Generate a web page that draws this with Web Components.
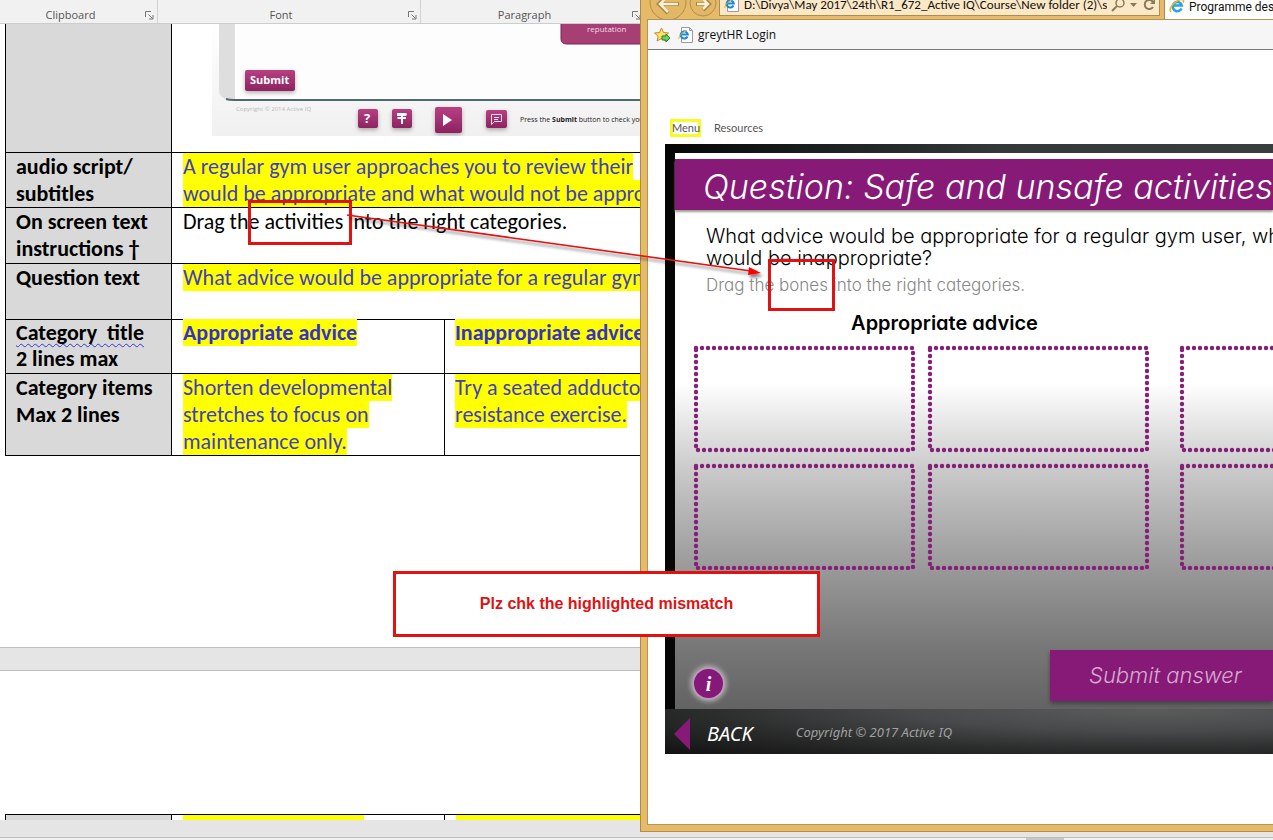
<!DOCTYPE html>
<html lang="en">
<head>
<meta charset="utf-8">
<title>Storyboard review</title>
<style>
html,body{margin:0;height:100%}
body{font-family:"Open Sans","Noto Sans",sans-serif;background:#e5e5e5;overflow:hidden}
</style>
</head>
<body>
<review-desktop>
  <word-window slot="document">
    <ribbon-group style="--w:158px" label="Clipboard"></ribbon-group>
    <ribbon-group style="--w:263px" label="Font"></ribbon-group>
    <ribbon-group style="--w:224px" label="Paragraph"></ribbon-group>
  </word-window>
  <browser-window slot="browser">
    <course-player></course-player>
  </browser-window>
  <review-notes slot="notes">Plz chk the highlighted mismatch</review-notes>
</review-desktop>

<script>
const define = (name, html) => customElements.define(name, class extends HTMLElement {
  constructor() {
    super();
    const t = document.createElement('template');
    t.innerHTML = html;
    this.attachShadow({mode: 'open'}).append(t.content.cloneNode(true));
    const label = this.shadowRoot.querySelector('[data-label]');
    if (label) label.textContent = this.getAttribute('label');
  }
});

define('review-desktop', `
<style>
:host{display:flex;flex-direction:column;height:100vh;min-height:640px;position:relative;overflow:hidden}
.windows{flex:1;display:grid;grid-template-columns:minmax(0,640fr) minmax(0,633fr);min-height:0}
.status{height:2px;background:#f1f1f1;border-top:1px solid #bdbdbd;display:flex;justify-content:flex-end}
.thumb{width:38px;background:#c6c6c6;margin-right:209px}
</style>
<div class="windows"><slot name="document"></slot><slot name="browser"></slot></div>
<div class="status"><span class="thumb"></span></div>
<slot name="notes"></slot>`);

define('ribbon-group', `
<style>
:host{display:flex;align-items:flex-end;width:var(--w);flex:none;box-sizing:border-box;height:23px;border-right:1px solid #d2d2d2;padding:0 3px 0 0;font:11px/16px "Open Sans",sans-serif;color:#555}
span{flex:1;text-align:center;padding-right:4px}
button{border:0;background:none;padding:0;margin:0 0 3px;width:9px;height:9px;line-height:0}
</style>
<span data-label></span>
<button aria-label="Open dialog"><svg width="9" height="9" viewBox="0 0 9 9" fill="none" stroke="#777"><path d="M.5 6V.5H6M3.500 3.500l4 4M8 4v4H4"/></svg></button>`);

define('slide-picture', `
<style>:host{display:block;line-height:0}svg{display:block}</style>
<svg width="440" height="112" viewBox="210 24 440 112" font-family="Open Sans, sans-serif">
<defs>
<linearGradient id="p" x2="0" y2="1"><stop stop-color="#b83f82"/><stop offset="1" stop-color="#8c2460"/></linearGradient>
<linearGradient id="b" x2="0" y2="1"><stop stop-color="#fff"/><stop offset="1" stop-color="#f0f0f0"/></linearGradient>
<filter id="s" x="-30%" y="-30%" width="160%" height="160%"><feDropShadow dx="0" dy="2" stdDeviation="2" flood-opacity=".3"/></filter>
</defs>
<path fill="url(#b)" d="M212 24h438v112H212z"/>
<path fill="#dedede" d="M219 24h20v76h-10q-10-2-10-10z"/>
<path fill="#fff" d="M235 24h415v75H235z"/>
<path stroke="#4f696d" stroke-width="2" fill="none" d="M226 99q3 1 8 1h416"/>
<path fill="#fdfdfd" d="M236 24h414v74H236z"/>
<path fill="#a63f74" stroke="#7b2454" stroke-width="1" d="M561 20v19q0 5 6 5h90V20z"/>
<text x="587" y="32" font-size="8" fill="#f3dbe8">reputation</text>
<rect x="245" y="70" width="50" height="21" rx="2" fill="url(#p)" filter="url(#s)"/>
<text x="250" y="84" font-size="11" font-weight="700" fill="#fff">Submit</text>
<text x="236" y="111" font-size="6" fill="#b8b8b8">Copyright © 2014 Active IQ</text>
<g filter="url(#s)" fill="url(#p)"><rect x="358" y="109" width="20" height="19" rx="2"/><rect x="392" y="109" width="20" height="19" rx="2"/><rect x="435" y="107" width="27" height="26" rx="2"/><rect x="486" y="110" width="21" height="18" rx="2"/></g>
<text x="364" y="123" font-size="13" font-weight="700" fill="#fff">?</text>
<path fill="#fff" d="M397 113h9l1 1-1 2h-9zM398 117h8v2h-8l-1-1zM401 113h2v11h-2zM443 114l9 6-9 6z"/>
<path fill="none" stroke="#f5dcea" d="M491.500 114.500h10v7h-7l-3 3zM494 117.500h5M494 119.500h4"/>
<text x="520" y="122" font-size="7" fill="#222">Press the <tspan font-weight="700">Submit</tspan> button to check you</text>
</svg>`);

define('word-window', `
<style>
:host{display:flex;flex-direction:column;min-width:0;overflow:hidden;background:#e5e5e5}
.ribbon{display:flex;height:23px;background:#f1f1f1;border-bottom:1px solid #c9cdcd;flex:none;overflow:hidden}
.page{background:#fff;border-bottom:1px solid #c0c0c0;overflow:hidden}
.first{height:623px;flex:none}
.next{margin-top:22px;border-top:1px solid #c0c0c0;flex:1;display:flex;flex-direction:column;justify-content:flex-end;border-bottom:0;margin-bottom:17px}
table{border-collapse:collapse;table-layout:fixed;width:716px;margin-left:5px;font:22px/27px Carlito,Lato,sans-serif;color:#000;flex:none}
th,td{border:1px solid #000;padding:0 10px 0 11px;text-align:left;vertical-align:top;height:54px;white-space:nowrap}
th{background:#d9d9d9;font-weight:700;padding:0 0 0 10px}
td+td{padding-left:10px}
.tall th,.tall td{height:55px}
.titles th,.titles td{height:53px;line-height:26px}
.pic th,.pic td{border-top:0;height:128px}
.pic td{padding:0 0 0 38px}
mark{background:#ff0;color:#3f3fbf}
.run{padding-right:20px}
b mark{color:#3333cc}
.squig{text-decoration:underline wavy #3535d5 1px;text-underline-offset:3px;text-decoration-skip-ink:none;white-space:pre}
.tail th,.tail td{height:5px;border-bottom:0;line-height:5px}
.tail td{padding-left:11px}
.bar{display:block;height:5px;background:#ff0;width:181px}
</style>
<div class="ribbon"><slot></slot></div>
<main class="page first">
<table><colgroup><col style="width:166px"><col style="width:273px"><col></colgroup>
<tr class="pic"><th></th><td colspan="2"><slide-picture></slide-picture></td></tr>
<tr><th>audio script/<br>subtitles</th><td colspan="2"><mark class="run">A regular gym user approaches you to review their <br>would be appropriate and what would not be appro</mark></td></tr>
<tr class="tall"><th>On screen text<br>instructions †</th><td colspan="2">Drag the activities into the right categories.</td></tr>
<tr class="tall"><th>Question text</th><td colspan="2"><mark>What advice would be appropriate for a regular gym</mark></td></tr>
<tr class="titles"><th><span class="squig">Category  title</span><br>2 lines max</th><td><b><mark>Appropriate advice</mark></b></td><td><b><mark>Inappropriate advice</mark></b></td></tr>
<tr><th>Category items<br>Max 2 lines</th><td><mark>Shorten developmental<br>stretches to focus on<br>maintenance only.</mark></td><td><mark>Try a seated adducto<br>resistance exercise.</mark></td></tr>
</table>
</main>
<section class="page next">
<table class="tail"><colgroup><col style="width:166px"><col style="width:273px"><col></colgroup>
<tr><th></th><td><span class="bar"></span></td><td><span class="bar" style="width:100%"></span></td></tr></table>
</section>`);

define('ie-logo', `
<style>:host{display:inline-block;width:16px;height:16px;flex:none}svg{display:block}</style>
<svg width="16" height="16" viewBox="0 0 16 16" fill="none"><path d="M12.500 10.500A4.600 4.600 0 1 1 12.800 7.500H4.500" stroke="#2aa3e6" stroke-width="2.600"/><path d="M2 14C-1 11 5 3 12 1.500c3-.5 3 1.500 2 3" stroke="#f0b323" stroke-width="1.500"/></svg>`);

define('ie-page', `
<style>:host{display:inline-block;width:16px;height:16px;flex:none}svg{display:block}</style>
<svg width="16" height="16" viewBox="0 0 16 16" fill="none"><path d="M3.500.5h8l3 3v12h-11z" fill="#fff" stroke="#9a9aa4"/><path d="M11.500.5v3h3" stroke="#9a9aa4"/><path d="M9.500 9.500A3.600 3.600 0 1 1 9.800 7.500H3" stroke="#1d87d4" stroke-width="2"/><path d="M1 12c-1-2 3-7 8-8.500" stroke="#eab52f"/></svg>`);

define('browser-window', `
<style>
:host{display:flex;flex-direction:column;min-width:0;background:#e6ba66;border-left:1px solid #a98a4c;margin-bottom:5px;box-sizing:border-box;border-bottom:1px solid #b38e47;padding:0 0 6px 6px;overflow:hidden}
.bar{height:19px;display:flex;flex:none;overflow:hidden}
.nav{flex:none;width:72px;height:19px}
.addr{flex:none;display:flex;align-items:flex-start;gap:4px;width:435px;height:15px;background:#fbe8c6;border:1px solid #b08d4c;border-top:0;overflow:hidden;padding-left:4px;margin-right:4px}
.addr ie-page{margin-top:-4px}
.addr input{flex:1;min-width:0;border:0;background:none;padding:0;outline:0;font:13px/16px Carlito,Lato,sans-serif;color:#111;height:16px;margin-top:-3px}
.tab{flex:1;background:#fff;border-left:1px solid #a98a4c;display:flex;gap:4px;padding-left:4px;font:12px/16px Roboto,sans-serif;white-space:nowrap;overflow:hidden;color:#111}
.tab ie-logo{margin-top:-2px}
.tab span{margin-top:-1px}
.view{flex:1;display:flex;flex-direction:column;background:#fff;border:1px solid #b0955c;border-right:0;min-height:0}
.fav{height:29px;flex:none;background:#f6f6f6;border-bottom:1px solid #777;display:flex;align-items:center;padding-left:6px;gap:7px}
.fav a{display:flex;align-items:center;gap:4px;color:#111;text-decoration:none;font:12px/16px "Open Sans",sans-serif}
.fav svg{display:block}
</style>
<div class="bar">
<svg class="nav" viewBox="0 0 72 19" fill="none"><g stroke="#b18e50"><circle cx="21" cy="2" r="18" fill="#e2b765"/><circle cx="56" cy="3" r="13" fill="#e2b765"/></g><g stroke="#a78347" stroke-width="4"><path d="M32 4H13M21-5l-9 9 9 9M49 4h13M56-2l6 6-6 6"/></g><g stroke="#fff0d0" stroke-width="2.500"><path d="M31 4H13M21-4l-8 8 8 8M50 4h11M56-1l5 5-5 5"/></g></svg>
<div class="addr"><ie-page></ie-page><input aria-label="Address" readonly value="D:\\Divya\\May 2017\\24th\\R1_672_Active IQ\\Course\\New folder (2)\\sto">
<svg width="48" height="15" viewBox="3 0 48 15" fill="none" stroke="#8b7a5a" stroke-width="1.500"><circle cx="12" cy="3" r="4"/><path d="M9 6l-5 5" stroke-width="2"/><path d="M22 3h7l-3.500 4z" fill="#8b7a5a" stroke="none"/><path d="M45 2a4.500 4.500 0 1 0 0 5" stroke-width="2"/><path d="M47-1v5h-5z" fill="#8b7a5a" stroke="none"/></svg></div>
<div class="tab"><ie-logo></ie-logo><span>Programme des</span></div>
</div>
<div class="view">
<nav class="fav"><svg width="17" height="16" viewBox="0 0 17 16"><path d="M7.500 1l2 4.500 5 .5-3.700 3.300L12 14l-4.500-2.500L3 14l1.200-4.700L.5 6l5-.5z" fill="#ffdf6c" stroke="#c98928"/><path d="M8 9h4V7l4 4-4 4v-2H8z" fill="#6cd354" stroke="#23872c"/></svg>
<a href="#"><ie-page></ie-page>greytHR Login</a></nav>
<slot></slot>
</div>`);

define('answer-slot', `
<style>:host{display:block;width:221px;height:107px}svg{display:block;overflow:visible}</style>
<svg width="221" height="107" viewBox="0 0 221 107"><rect x="2" y="3" width="217" height="102" fill="none" stroke="#85207a" stroke-width="4.400" stroke-linecap="round" stroke-dasharray="0 6"/></svg>`);

define('course-player', `
<style>
:host{display:flex;flex-direction:column;padding:70px 0 0 17px;min-width:0;overflow:hidden}
button{border:0;margin:0;padding:0;background:none;font:inherit;color:inherit}
.menu{display:flex;height:24px;align-items:flex-start;gap:13px;padding-left:5px;font:11px/16px Lato,sans-serif;color:#555}
.menu a{color:inherit;text-decoration:none}
.menu a:first-child{box-shadow:inset 0 0 0 3px #f9f923;padding:1px 2px;margin-top:-1px;width:27px}
.frame{background:linear-gradient(90deg,#050505,#1c1f1f 25%,#343838 55%,#3a3d3d);padding:9px 0 0 10px}
.stage{background:linear-gradient(#fff 0,#fff 230px,#c8c8c8 320px,#979797 420px,#777 495px,#636363 556px);height:550px;padding-top:6px;display:flex;flex-direction:column}
.stage{--gothic:Inter,Lato,sans-serif;font-feature-settings:"cv11"}
h1{margin:0;flex:none;height:51px;background:#861a76;box-shadow:0 2px 2px #9a9d8c;color:#fff;font:italic 300 34px/56px var(--gothic);font-feature-settings:"cv11";padding-left:28px;white-space:nowrap;overflow:hidden}
.q,.hint,h2,.submit{font-feature-settings:"cv11"!important}
.q{margin:15px 0 0 31px;font:300 20px/22px var(--gothic);color:#000;white-space:nowrap}
.hint{margin:5px 0 0 31px;font:300 17px/22px var(--gothic);color:#888;white-space:nowrap}
h2{margin:15px 0 10px;width:455px;padding-left:42px;font:600 20px/24px var(--gothic);text-align:center;color:#000}
.groups{display:flex;gap:31px;padding-left:19px;overflow:hidden}
.grid{display:grid;grid-template-columns:221px 221px;gap:11px 13px;flex:none}
.actions{margin-top:auto;display:flex;justify-content:space-between;align-items:flex-end;padding:0 0 8px 19px}
.info{width:29px;height:29px;border-radius:50%;background:#85197a;box-shadow:0 0 0 2px #b79bb3,0 0 4px 4px #a5a5a5;color:#fff;font:italic 700 20px/28px "Liberation Serif",serif;margin-bottom:3px}
.submit{width:223px;height:51px;background:#861a76;box-shadow:0 3px 4px #444;color:#d6a9d0;font:italic 300 22px/51px var(--gothic);text-align:left;padding-left:39px;white-space:nowrap}
footer{display:flex;align-items:center;height:45px;background:radial-gradient(ellipse at 80% 0,#5b5c5c 0,#48494a 35%,#2b2c2c 65%,#121212 100%);margin-left:-10px;padding-left:9px}
.back{display:flex;align-items:center;gap:17px;color:#fff;font:italic 20px/24px "Noto Sans",sans-serif;margin-top:4px}
small{margin-left:43px;font:italic 13px/18px "Noto Sans",sans-serif;color:#a0a0a0}
</style>
<nav class="menu"><a href="#">Menu</a><a href="#">Resources</a></nav>
<div class="frame">
<section class="stage">
<h1>Question: Safe and unsafe activities</h1>
<p class="q">What advice would be appropriate for a regular gym user, wh<br>would be inappropriate?</p>
<p class="hint">Drag the bones into the right categories.</p>
<h2>Appropriate advice</h2>
<div class="groups">
<div class="grid"><answer-slot></answer-slot><answer-slot></answer-slot><answer-slot></answer-slot><answer-slot></answer-slot></div>
<div class="grid"><answer-slot></answer-slot><answer-slot></answer-slot><answer-slot></answer-slot><answer-slot></answer-slot></div>
</div>
<div class="actions"><button class="info" aria-label="Information">i</button><button class="submit">Submit answer</button></div>
</section>
<footer><button class="back"><svg width="16" height="32" viewBox="0 0 16 32"><path d="M16 0v32L0 16z" fill="#861a76"/></svg>BACK</button><small>Copyright © 2017 Active IQ</small></footer>
</div>`);

define('review-notes', `
<style>
:host{position:absolute;inset:0;pointer-events:none}
svg{position:absolute;left:0;top:0;overflow:visible}
p{position:absolute;left:393px;top:571px;width:421px;height:60px;margin:0;border:3px solid #e01212;background:#fff;color:#e01212;font:700 16px/60px "Liberation Sans",Arial,sans-serif;text-align:center;white-space:nowrap}
</style>
<svg width="1" height="1"><defs><filter id="d" x="-10%" y="-20%" width="120%" height="160%"><feDropShadow dx="2" dy="3" stdDeviation="1.500" flood-opacity=".5"/></filter></defs>
<g fill="none" stroke="#e01212" stroke-width="3"><path d="M249.500 201.500h101v42h-101zM769.500 260.500h64v49h-64z"/></g>
<g filter="url(#d)"><path d="M347 215l404 56" stroke="#e01212" stroke-width="1.600"/><path d="M761 273l-13 2 1-8z" fill="#f00"/></g></svg>
<p><slot></slot></p>`);
</script>
</body>
</html>
